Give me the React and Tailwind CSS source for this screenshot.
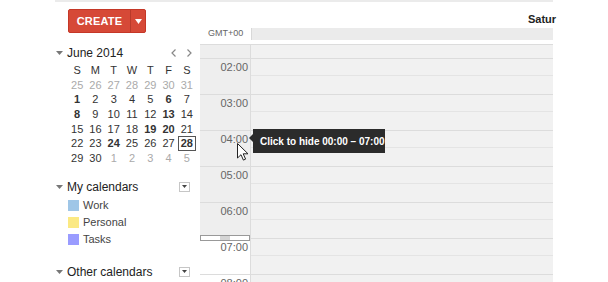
import React from "react";

const weeks = [
  [25, 26, 27, 28, 29, 30, 31],
  [1, 2, 3, 4, 5, 6, 7],
  [8, 9, 10, 11, 12, 13, 14],
  [15, 16, 17, 18, 19, 20, 21],
  [22, 23, 24, 25, 26, 27, 28],
  [29, 30, 1, 2, 3, 4, 5],
];
const bold = [1, 6, 8, 13, 19, 20, 24, 28];

const calendars = [
  { name: "Work", color: "bg-[#9fc6e7]" },
  { name: "Personal", color: "bg-[#fbe983]" },
  { name: "Tasks", color: "bg-[#9a9cff]" },
];

const hours = ["02:00", "03:00", "04:00", "05:00", "06:00", "07:00", "08:00"];

function Caret() {
  return (
    <svg width="7" height="4" viewBox="0 0 7 4" className="mr-[4px]">
      <path d="M0 0h7L3.5 4z" fill="#777" />
    </svg>
  );
}

function MenuBox() {
  return (
    <div className="w-[11px] h-[10px] border border-[#c6c6c6] bg-white flex items-center justify-center">
      <svg width="5" height="3" viewBox="0 0 5 3">
        <path d="M0 0h5L2.5 3z" fill="#444" />
      </svg>
    </div>
  );
}

function MiniMonth() {
  return (
    <div className="ml-[12px] w-[128px] grid grid-cols-7 text-[11px] text-center">
      {["S", "M", "T", "W", "T", "F", "S"].map((d, i) => (
        <div key={i} className="h-[14.67px] leading-[14.67px] text-[#333]">{d}</div>
      ))}
      {weeks.map((w, wi) =>
        w.map((d, di) => {
          const other = (wi === 0) || (wi === 5 && d < 20);
          const isBold = !other && bold.includes(d);
          const today = wi === 4 && d === 28;
          return (
            <div key={wi + "-" + di} className="h-[14.67px] flex items-center justify-center">
              <span
                className={
                  (other ? "text-[#aaa] " : "text-[#333] ") +
                  (isBold ? "font-bold " : "") +
                  (today ? "border border-[#555] w-[19px] h-[15px] leading-[13px] " : "leading-[14.67px]")
                }
              >
                {d}
              </span>
            </div>
          );
        })
      )}
    </div>
  );
}

function Sidebar() {
  return (
    <div className="w-[200px] shrink-0 pl-[56px] flex flex-col">
      <div className="mt-[7px] ml-[12px] flex h-[24px] w-[78px] rounded-[2px] bg-[#d64937] text-white border border-[#c53727]">
        <div className="w-[61px] flex items-center justify-center text-[11px] font-bold tracking-[0.2px]">CREATE</div>
        <div className="w-px bg-[#b93a2a]" />
        <div className="flex-1 flex items-center justify-center">
          <svg width="7" height="5" viewBox="0 0 7 5">
            <path d="M0 0h7L3.5 5z" fill="#fff" />
          </svg>
        </div>
      </div>
      <div className="mt-[12px] h-[16px] flex items-center">
        <Caret />
        <span className="text-[12px] text-[#222]">June 2014</span>
        <div className="ml-auto mr-[8px] flex items-center gap-[11px]">
          <svg width="5" height="8" viewBox="0 0 5 8">
            <path d="M4.5 0.5L1 4l3.5 3.5" stroke="#888" strokeWidth="1.2" fill="none" />
          </svg>
          <svg width="5" height="8" viewBox="0 0 5 8">
            <path d="M0.5 0.5L4 4L0.5 7.5" stroke="#888" strokeWidth="1.2" fill="none" />
          </svg>
        </div>
      </div>
      <div className="mt-[2px]">
        <MiniMonth />
      </div>
      <div className="mt-[13px] h-[16px] flex items-center pr-[10px]">
        <Caret />
        <span className="text-[12px] text-[#222]">My calendars</span>
        <div className="ml-auto"><MenuBox /></div>
      </div>
      <div className="mt-[2px] flex flex-col">
        {calendars.map((c) => (
          <div key={c.name} className="h-[17px] flex items-center pl-[12px]">
            <div className={"w-[11px] h-[11px] " + c.color} />
            <span className="ml-[4px] text-[11px] text-[#444]">{c.name}</span>
          </div>
        ))}
      </div>
      <div className="mt-[16px] h-[16px] flex items-center pr-[10px]">
        <Caret />
        <span className="text-[12px] text-[#222]">Other calendars</span>
        <div className="ml-auto"><MenuBox /></div>
      </div>
    </div>
  );
}

function DayView() {
  return (
    <div className="w-[353px] shrink-0 flex flex-col">
      <div className="h-[26px] pt-[10px] pl-[328px] whitespace-nowrap text-[11px] font-bold leading-[14px] text-[#222]">
        Satur
      </div>
      <div className="h-[16px] flex">
        <div className="w-[51px] text-[9px] leading-[10px] text-[#666] pl-[8px]">GMT+00</div>
        <div className="flex-1 h-[12px] bg-[#ebebeb] border-l border-[#d8d8d8]" />
      </div>
      <div className="flex flex-col border-t border-[#dcdcdc]">
        <div className="h-[13px] flex">
          <div className="w-[51px] bg-[#eeeeee] border-r border-[#dcdcdc]" />
          <div className="flex-1 bg-[#f1f1f1]" />
        </div>
        {hours.map((h, i) => (
          <div key={h} className="relative h-[36px] flex border-t border-[#dcdcdc]">
            <div
              className={
                "w-[51px] border-r border-[#dcdcdc] text-right pr-[2px] " +
                (i < 5 ? "bg-[#eeeeee]" : "bg-white")
              }
            >
              <div className="mt-[1px] text-[11px] leading-[14px] text-[#666]">{h}</div>
            </div>
            <div className="flex-1 bg-[#f1f1f1] flex flex-col">
              <div className="h-[17px] border-b border-[#e4e4e4]" />
            </div>
            {h === "07:00" && (
              <div className="absolute left-0 top-[-4px] w-[50px] h-[6px] bg-white border border-[#999] flex justify-center">
                <div className="w-[10px] h-full bg-[#d5d5d5]" />
              </div>
            )}
          </div>
        ))}
      </div>
    </div>
  );
}

export default function App() {
  return (
    <div
      className="relative w-[608px] h-[282px] overflow-hidden bg-white"
      style={{ fontFamily: '"Liberation Sans", Arial, sans-serif' }}
    >
      <div className="ml-[55px] w-[498px] h-[2px] bg-[#ebebeb]" />
      <div className="flex">
        <Sidebar />
        <DayView />
      </div>
      <div className="absolute left-[249px] top-[129px] flex items-center">
        <svg width="4" height="8" viewBox="0 0 4 8" className="-mt-[6px]">
          <path d="M4 0v8L0 4z" fill="#2b2b2b" />
        </svg>
        <div className="h-[24px] w-[132px] bg-[#2b2b2b] text-white text-[10px] font-bold flex items-center pl-[7px] whitespace-nowrap">
          Click to hide 00:00 – 07:00
        </div>
      </div>
      <svg className="absolute left-[237px] top-[143px]" width="12" height="18" viewBox="0 0 12 18">
        <path d="M0.5 0.5v14.5l3.5-3.3 2.4 5.4 2.2-1-2.4-5.3h4.8z" fill="#fff" stroke="#222" strokeWidth="1" strokeLinejoin="round" />
      </svg>
    </div>
  );
}
